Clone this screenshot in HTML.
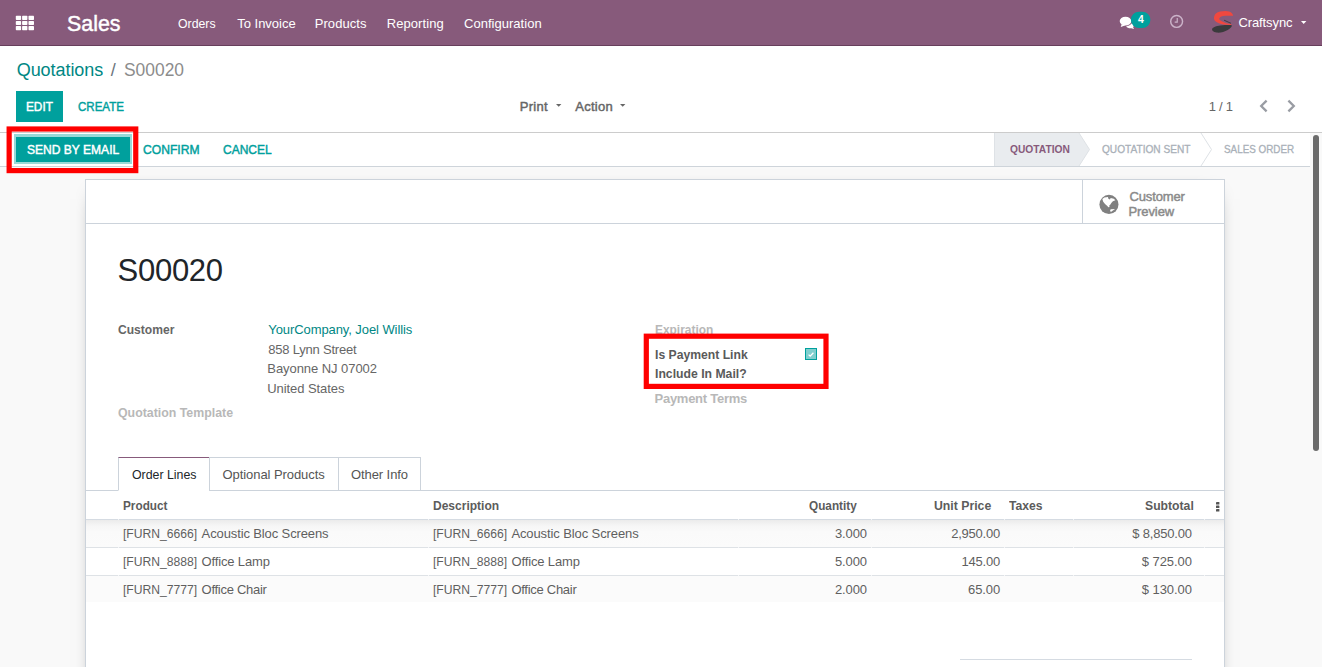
<!DOCTYPE html>
<html lang="en">
<head>
<meta charset="utf-8">
<title>S00020 - Odoo</title>
<style>
html,body{margin:0;padding:0}
body{width:1322px;height:667px;overflow:hidden;position:relative;background:#f9f9f9;font-family:"Liberation Sans",sans-serif;font-size:13px;color:#666}
.a{position:absolute;box-sizing:border-box}
.t{position:absolute;white-space:pre;line-height:1;font-size:13px}
.z{z-index:5}
.s{transform-origin:0 0}
svg{position:absolute;overflow:visible}
</style>
</head>
<body>
<!-- navbar -->
<div class="a" id="nav" style="left:0;top:0;width:1322px;height:46px;background:#875A7B;border-bottom:1px solid #673f5c"></div>
<svg style="left:0;top:0" width="50" height="46" viewBox="0 0 50 46"><g fill="#fff"><rect x="15.8" y="15.8" width="5.3" height="4.1" rx=".7"/><rect x="22.1" y="15.8" width="5.3" height="4.1" rx=".7"/><rect x="28.5" y="15.8" width="5.5" height="4.1" rx=".7"/><rect x="15.8" y="21.05" width="5.3" height="3.9" rx=".7"/><rect x="22.1" y="21.05" width="5.3" height="3.9" rx=".7"/><rect x="28.5" y="21.05" width="5.5" height="3.9" rx=".7"/><rect x="15.8" y="26" width="5.3" height="4.2" rx=".7"/><rect x="22.1" y="26" width="5.3" height="4.2" rx=".7"/><rect x="28.5" y="26" width="5.5" height="4.2" rx=".7"/></g></svg>
<!-- chat icon -->
<svg style="left:1114px;top:6px" width="80" height="32" viewBox="0 0 1322 529">
<g fill="#fff">
<ellipse cx="190" cy="250" rx="96" ry="71"/>
<path d="M125 300 L112 348 L190 318Z"/>
<path d="M200 335 C240 330 280 310 295 285 C330 300 335 335 315 352 L332 382 L285 368 C250 372 215 360 200 335Z"/>
</g>
<rect x="280" y="95" width="321" height="270" rx="134" fill="#00A09D"/>
<circle cx="1035" cy="255" r="98" fill="none" stroke="#cbb3c9" stroke-width="24"/>
<path d="M1045 200 V265 H1003" fill="none" stroke="#cbb3c9" stroke-width="20"/>
</svg>
<!-- avatar -->
<svg style="left:1204px;top:4px" width="40" height="36" viewBox="0 0 741 667">
<path d="M537 205 L520 175 C490 140 450 128 400 128 C330 128 260 140 220 175 C190 205 180 250 185 280 C195 320 240 350 300 365 C370 385 450 390 505 390 L505 372 C440 368 380 350 330 320 C295 300 275 285 285 265 C295 235 330 222 400 218 C450 215 500 215 537 218Z" fill="#f0483f"/>
<path d="M515 392 C520 420 490 450 440 480 C380 515 300 540 230 530 C170 520 140 490 150 465 C165 430 230 405 300 400 C380 392 450 390 515 392Z" fill="#3a3a3c"/>
<path d="M372 300 L500 358" stroke="#3a3a3c" stroke-width="17" fill="none"/>
</svg>
<svg style="left:1300.5px;top:21px" width="5.4" height="3" viewBox="0 0 5.4 3"><path d="M0 0H5.4L2.7 3Z" fill="#fff"/></svg>

<!-- control panel -->
<div class="a" style="left:0;top:46px;width:1322px;height:87px;background:#fff;border-bottom:1px solid #cccccc"></div>
<div class="a" style="left:16px;top:91px;width:47px;height:31px;background:#00A09D"></div>
<svg style="left:555.8px;top:104.3px" width="5.4" height="2.8" viewBox="0 0 5.4 2.8"><path d="M0 0H5.4L2.7 2.8Z" fill="#666"/></svg>
<svg style="left:619.7px;top:104.3px" width="5.4" height="2.8" viewBox="0 0 5.4 2.8"><path d="M0 0H5.4L2.7 2.8Z" fill="#666"/></svg>
<svg style="left:1259px;top:99px" width="10" height="14" viewBox="0 0 10 14"><path d="M7.6 1.6 L2.2 7 L7.6 12.4" fill="none" stroke="#999ca3" stroke-width="2.3"/></svg>
<svg style="left:1286px;top:99px" width="10" height="14" viewBox="0 0 10 14"><path d="M2.4 1.6 L7.8 7 L2.4 12.4" fill="none" stroke="#999ca3" stroke-width="2.3"/></svg>

<!-- status bar -->
<div class="a" style="left:0;top:133px;width:1310px;height:34px;background:#fff;border-bottom:1px solid #ced4da"></div>
<div class="a" style="left:14px;top:134px;width:118px;height:30px;background:#99d9d8"></div>
<div class="a" style="left:16px;top:137px;width:114px;height:25px;background:#00A09D"></div>
<svg style="left:994px;top:133px" width="316" height="33" viewBox="0 0 316 33">
<path d="M0.5 0 V33 H85 L95.5 16.5 L85 0Z" fill="#e9ecef"/>
<path d="M0.5 0 V33" stroke="#dee2e6" fill="none"/>
<path d="M85 0 L95.5 16.5 L85 33" stroke="#dee2e6" fill="none"/>
<path d="M207 0 L217.5 16.5 L207 33" stroke="#dee2e6" fill="none"/>
</svg>

<!-- sheet -->
<div class="a" id="sheet" style="left:85px;top:179px;width:1140px;height:520px;background:#fff;border:1px solid #ccd3db;box-shadow:0 5px 20px -15px #000"></div>
<div class="a" style="left:86px;top:223px;width:1138px;height:1px;background:#ccd3db"></div>
<div class="a" style="left:1082px;top:180px;width:1px;height:43px;background:#ccd3db"></div>
<!-- globe -->
<svg style="left:1094px;top:189px" width="30" height="30" viewBox="0 0 667 667">
<circle cx="332.5" cy="342.5" r="212" fill="#808080"/>
<path d="M185 225 L230 190 L310 178 L320 215 L355 235 L370 200 L440 215 L475 250 L420 275 L385 310 L365 345 L340 365 L345 400 L320 405 L290 370 L245 335 L205 285Z" fill="#fff"/>
<path d="M370 450 L468 445 L420 480 L385 505 L355 495Z" fill="#fff"/>
</svg>

<!-- checkbox -->
<div class="a" style="left:805px;top:348px;width:12px;height:12px;background:#80cfce;border:1px solid #00A09D"></div>
<svg style="left:808px;top:351.6px" width="6" height="5" viewBox="0 0 6 5"><path d="M0.6 2.6 L2.2 4.1 L5.4 0.8" fill="none" stroke="#fff" stroke-width="1.3"/></svg>

<!-- tabs -->
<div class="a" style="left:86px;top:490px;width:1138px;height:1px;background:#ccd3db"></div>
<div class="a" style="left:118px;top:457px;width:92px;height:34px;background:#fff;border:1px solid #ccd3db;border-top-color:#875A7B;border-bottom-color:#fff"></div>
<div class="a" style="left:209px;top:457px;width:130px;height:34px;border:1px solid #ccd3db;border-left:0"></div>
<div class="a" style="left:338px;top:457px;width:83px;height:34px;border:1px solid #ccd3db"></div>

<!-- table -->
<div class="a" style="left:86px;top:520px;width:1138px;height:27px;background:linear-gradient(#ebebeb,#f6f6f6 6px,#fafafa 12px,#fbfbfb)"></div>
<div class="a" style="left:86px;top:576px;width:1138px;height:26px;background:#fbfbfb"></div>
<div class="a" style="left:86px;top:519px;width:1138px;height:1px;background:#d5dbe2"></div>
<div class="a" style="left:86px;top:547px;width:1138px;height:1px;background:#dee2e6"></div>
<div class="a" style="left:86px;top:575px;width:1138px;height:1px;background:#dee2e6"></div>
<div class="a" style="left:117.5px;top:519px;width:1.5px;height:57px;background:linear-gradient(rgba(255,255,255,.7) 1px,transparent 1px,transparent 28px,rgba(255,255,255,.7) 28px,rgba(255,255,255,.7) 29px,transparent 29px,transparent 56px,rgba(255,255,255,.7) 56px)"></div>
<div class="a" style="left:427.6px;top:519px;width:1.5px;height:57px;background:linear-gradient(rgba(255,255,255,.7) 1px,transparent 1px,transparent 28px,rgba(255,255,255,.7) 28px,rgba(255,255,255,.7) 29px,transparent 29px,transparent 56px,rgba(255,255,255,.7) 56px)"></div>
<div class="a" style="left:737.7px;top:519px;width:1.5px;height:57px;background:linear-gradient(rgba(255,255,255,.7) 1px,transparent 1px,transparent 28px,rgba(255,255,255,.7) 28px,rgba(255,255,255,.7) 29px,transparent 29px,transparent 56px,rgba(255,255,255,.7) 56px)"></div>
<div class="a" style="left:870.8px;top:519px;width:1.5px;height:57px;background:linear-gradient(rgba(255,255,255,.7) 1px,transparent 1px,transparent 28px,rgba(255,255,255,.7) 28px,rgba(255,255,255,.7) 29px,transparent 29px,transparent 56px,rgba(255,255,255,.7) 56px)"></div>
<div class="a" style="left:1003.5px;top:519px;width:1.5px;height:57px;background:linear-gradient(rgba(255,255,255,.7) 1px,transparent 1px,transparent 28px,rgba(255,255,255,.7) 28px,rgba(255,255,255,.7) 29px,transparent 29px,transparent 56px,rgba(255,255,255,.7) 56px)"></div>
<div class="a" style="left:1072.9px;top:519px;width:1.5px;height:57px;background:linear-gradient(rgba(255,255,255,.7) 1px,transparent 1px,transparent 28px,rgba(255,255,255,.7) 28px,rgba(255,255,255,.7) 29px,transparent 29px,transparent 56px,rgba(255,255,255,.7) 56px)"></div>
<div class="a" style="left:1203.5px;top:519px;width:1.5px;height:57px;background:linear-gradient(rgba(255,255,255,.7) 1px,transparent 1px,transparent 28px,rgba(255,255,255,.7) 28px,rgba(255,255,255,.7) 29px,transparent 29px,transparent 56px,rgba(255,255,255,.7) 56px)"></div>
<svg style="left:1215.5px;top:501.5px" width="3.4" height="9.6" viewBox="0 0 3.4 9.6"><g fill="#555"><rect width="3.4" height="2.6" rx=".4"/><rect y="3.5" width="3.4" height="2.6" rx=".4"/><rect y="7" width="3.4" height="2.6" rx=".4"/></g></svg>
<div class="a" style="left:960px;top:659px;width:232px;height:1px;background:#d5dbe2"></div>

<!-- annotation rectangles -->
<svg class="z" style="left:0;top:0" width="1322" height="667" viewBox="0 0 1322 667"><g fill="none" stroke="#f00" stroke-width="5.2">
<rect x="9.15" y="129" width="126.6" height="41.6"/>
<rect x="646.3" y="336.2" width="179.7" height="50.2"/>
</g></svg>

<!-- scrollbar -->
<div class="a" style="left:1313px;top:135px;width:6px;height:316px;border-radius:3px;background:#6b6b6b"></div>

<span class="t s" style="left:66.83px;top:12.50px;font-size:22px;-webkit-text-stroke:0.45px;color:#fff;transform:scaleX(0.9716)">Sales</span>
<span class="t s" style="left:178.30px;top:17.00px;color:#fff;transform:scaleX(0.9446)">Orders</span>
<span class="t" style="left:237.30px;top:17.00px;color:#fff;letter-spacing:-0.022px">To Invoice</span>
<span class="t" style="left:314.70px;top:17.00px;color:#fff;letter-spacing:0.071px">Products</span>
<span class="t" style="left:386.70px;top:17.00px;color:#fff;letter-spacing:0.083px">Reporting</span>
<span class="t" style="left:464.00px;top:17.00px;color:#fff;letter-spacing:0.025px">Configuration</span>
<span class="t" style="left:1138.10px;top:14.90px;font-size:10.4px;font-weight:700;color:#fff;letter-spacing:0.000px">4</span>
<span class="t" style="left:1238.50px;top:16.40px;color:#fff;letter-spacing:-0.113px">Craftsync</span>
<span class="t" style="left:16.70px;top:60.80px;font-size:18px;color:#008784;letter-spacing:-0.051px">Quotations</span>
<span class="t" style="left:110.80px;top:60.80px;font-size:18px;color:#6c757d;letter-spacing:0.000px">/</span>
<span class="t s" style="left:124.00px;top:60.80px;font-size:18px;color:#8c8c8c;transform:scaleX(0.9670)">S00020</span>
<span class="t s" style="left:25.59px;top:100.00px;-webkit-text-stroke:0.45px;color:#fff;transform:scaleX(0.9068)">EDIT</span>
<span class="t s" style="left:77.80px;top:100.00px;-webkit-text-stroke:0.45px;color:#00A09D;transform:scaleX(0.8869)">CREATE</span>
<span class="t" style="left:519.80px;top:99.80px;-webkit-text-stroke:0.45px;color:#666;letter-spacing:0.270px">Print</span>
<span class="t" style="left:575.30px;top:99.80px;-webkit-text-stroke:0.45px;color:#666;letter-spacing:0.260px">Action</span>
<span class="t" style="left:1208.80px;top:100.00px;color:#666;letter-spacing:-0.266px">1 / 1</span>
<span class="t s" style="left:26.50px;top:143.00px;-webkit-text-stroke:0.45px;color:#fff;transform:scaleX(0.9269)">SEND BY EMAIL</span>
<span class="t s" style="left:143.00px;top:143.00px;-webkit-text-stroke:0.45px;color:#00A09D;transform:scaleX(0.9327)">CONFIRM</span>
<span class="t s" style="left:222.80px;top:143.00px;-webkit-text-stroke:0.45px;color:#00A09D;transform:scaleX(0.9218)">CANCEL</span>
<span class="t s" style="left:1009.70px;top:144.00px;font-size:11px;font-weight:700;color:#875A7B;transform:scaleX(0.9299)">QUOTATION</span>
<span class="t s" style="left:1102.30px;top:144.00px;font-size:11px;-webkit-text-stroke:0.3px;color:#a9b0b8;transform:scaleX(0.9199)">QUOTATION SENT</span>
<span class="t s" style="left:1223.80px;top:144.00px;font-size:11px;-webkit-text-stroke:0.3px;color:#a9b0b8;transform:scaleX(0.8965)">SALES ORDER</span>
<span class="t" style="left:1129.50px;top:189.90px;-webkit-text-stroke:0.45px;color:#8a8a8a;letter-spacing:-0.146px">Customer</span>
<span class="t" style="left:1128.50px;top:204.70px;-webkit-text-stroke:0.45px;color:#8a8a8a;letter-spacing:-0.091px">Preview</span>
<span class="t" style="left:117.60px;top:255.30px;font-size:31px;color:#212529;letter-spacing:-0.288px">S00020</span>
<span class="t s" style="left:118.30px;top:323.20px;font-weight:700;color:#666;transform:scaleX(0.9288)">Customer</span>
<span class="t" style="left:268.30px;top:322.80px;color:#008784;letter-spacing:-0.085px">YourCompany, Joel Willis</span>
<span class="t" style="left:268.30px;top:342.80px;color:#666;letter-spacing:-0.221px">858 Lynn Street</span>
<span class="t" style="left:267.30px;top:361.80px;color:#666;letter-spacing:-0.057px">Bayonne NJ 07002</span>
<span class="t" style="left:267.30px;top:381.70px;color:#666;letter-spacing:-0.079px">United States</span>
<span class="t s" style="left:118.30px;top:406.00px;font-weight:700;color:#b8b8b8;transform:scaleX(0.9498)">Quotation Template</span>
<span class="t s" style="left:654.90px;top:323.20px;font-weight:700;color:#b8b8b8;transform:scaleX(0.9163)">Expiration</span>
<span class="t z s" style="left:654.80px;top:347.80px;font-weight:700;color:#5a5a5a;transform:scaleX(0.9364)">Is Payment Link</span>
<span class="t z s" style="left:654.80px;top:367.00px;font-weight:700;color:#5a5a5a;transform:scaleX(0.9399)">Include In Mail?</span>
<span class="t" style="left:654.50px;top:392.00px;font-weight:700;color:#b8b8b8;letter-spacing:-0.260px">Payment Terms</span>
<span class="t s" style="left:131.60px;top:467.80px;color:#212529;transform:scaleX(0.9500)">Order Lines</span>
<span class="t" style="left:222.50px;top:467.80px;color:#555;letter-spacing:-0.071px">Optional Products</span>
<span class="t" style="left:351.00px;top:467.80px;color:#555;letter-spacing:-0.086px">Other Info</span>
<span class="t s" style="left:123.00px;top:498.90px;font-weight:700;color:#5c5c5c;transform:scaleX(0.9059)">Product</span>
<span class="t s" style="left:432.80px;top:498.90px;font-weight:700;color:#5c5c5c;transform:scaleX(0.9249)">Description</span>
<span class="t s" style="left:809.10px;top:498.90px;font-weight:700;color:#5c5c5c;transform:scaleX(0.9048)">Quantity</span>
<span class="t s" style="left:933.90px;top:498.90px;font-weight:700;color:#5c5c5c;transform:scaleX(0.9429)">Unit Price</span>
<span class="t s" style="left:1009.00px;top:498.90px;font-weight:700;color:#5c5c5c;transform:scaleX(0.9337)">Taxes</span>
<span class="t s" style="left:1145.40px;top:498.90px;font-weight:700;color:#5c5c5c;transform:scaleX(0.9381)">Subtotal</span>
<span class="t s" style="left:123.00px;top:527.00px;color:#5f5f5f;transform:scaleX(0.9332)">[FURN_6666]</span>
<span class="t" style="left:201.60px;top:527.00px;color:#5f5f5f;letter-spacing:-0.117px">Acoustic Bloc Screens</span>
<span class="t s" style="left:432.80px;top:527.00px;color:#5f5f5f;transform:scaleX(0.9332)">[FURN_6666]</span>
<span class="t" style="left:511.40px;top:527.00px;color:#5f5f5f;letter-spacing:-0.102px">Acoustic Bloc Screens</span>
<span class="t" style="left:835.00px;top:527.00px;color:#5f5f5f;letter-spacing:-0.125px">3.000</span>
<span class="t" style="left:951.20px;top:527.00px;color:#5f5f5f;letter-spacing:-0.239px">2,950.00</span>
<span class="t" style="left:1132.30px;top:527.00px;color:#5f5f5f;letter-spacing:-0.202px">$ 8,850.00</span>
<span class="t s" style="left:123.00px;top:555.00px;color:#5f5f5f;transform:scaleX(0.9332)">[FURN_8888]</span>
<span class="t" style="left:201.60px;top:555.00px;color:#5f5f5f;letter-spacing:-0.152px">Office Lamp</span>
<span class="t s" style="left:432.80px;top:555.00px;color:#5f5f5f;transform:scaleX(0.9332)">[FURN_8888]</span>
<span class="t" style="left:511.40px;top:555.00px;color:#5f5f5f;letter-spacing:-0.122px">Office Lamp</span>
<span class="t" style="left:835.00px;top:555.00px;color:#5f5f5f;letter-spacing:-0.125px">5.000</span>
<span class="t" style="left:961.50px;top:555.00px;color:#5f5f5f;letter-spacing:-0.226px">145.00</span>
<span class="t" style="left:1141.80px;top:555.00px;color:#5f5f5f;letter-spacing:-0.068px">$ 725.00</span>
<span class="t s" style="left:123.00px;top:583.00px;color:#5f5f5f;transform:scaleX(0.9332)">[FURN_7777]</span>
<span class="t" style="left:201.60px;top:583.00px;color:#5f5f5f;letter-spacing:-0.279px">Office Chair</span>
<span class="t s" style="left:432.80px;top:583.00px;color:#5f5f5f;transform:scaleX(0.9332)">[FURN_7777]</span>
<span class="t" style="left:511.40px;top:583.00px;color:#5f5f5f;letter-spacing:-0.279px">Office Chair</span>
<span class="t" style="left:835.00px;top:583.00px;color:#5f5f5f;letter-spacing:-0.125px">2.000</span>
<span class="t" style="left:968.00px;top:583.00px;color:#5f5f5f;letter-spacing:-0.100px">65.00</span>
<span class="t" style="left:1141.80px;top:583.00px;color:#5f5f5f;letter-spacing:-0.068px">$ 130.00</span>
</body>
</html>
